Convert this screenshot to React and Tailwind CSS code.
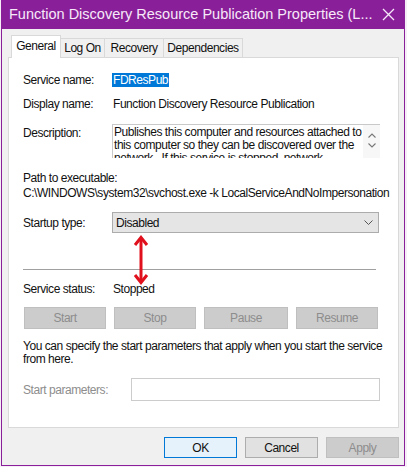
export default function App() {
  const btnDisabled =
    "w-[82px] h-[22px] bg-[#cccccc] border border-[#bfbfbf] text-[#8d8d8d] flex items-center justify-center";
  return (
    <div className="w-[407px] h-[467px] bg-[#f6eef7] overflow-hidden font-['Liberation_Sans',Arial,sans-serif] text-[12px] tracking-[-0.45px] text-[#111]">
      <div className="ml-[1px] w-[404px] h-[466px] bg-[#f0f0f0] border-x border-b border-[#8a1f9a] flex flex-col">
        {/* title bar */}
        <div className="h-[29px] bg-[#8a1f9a] flex items-center pl-[7px] pr-[7px] shrink-0">
          <span className="flex-1 text-[14.5px] tracking-normal text-[#f6e9f8] whitespace-nowrap">
            Function Discovery Resource Publication Properties (L...
          </span>
          <svg width="13" height="13" viewBox="0 0 13 13" className="mr-[2px]">
            <path d="M1 1 L12 12 M12 1 L1 12" stroke="#f6e9f8" strokeWidth="1.3" />
          </svg>
        </div>

        <div className="flex-1 flex flex-col pl-[6px] pr-[5px] pt-[6px]">
          {/* tabs */}
          <div className="flex items-end h-[22px] pl-[3px] relative z-10">
            <div className="w-[50px] h-[23px] -mb-px bg-white border-t border-x border-[#d9d9d9] flex items-center justify-center pb-[2px]">
              General
            </div>
            <div className="w-[44px] h-[19px] border-t border-r border-[#d9d9d9] flex items-center justify-center">
              Log On
            </div>
            <div className="w-[59px] h-[19px] border-t border-r border-[#d9d9d9] flex items-center justify-center">
              Recovery
            </div>
            <div className="w-[79px] h-[19px] border-t border-r border-[#d9d9d9] flex items-center justify-center">
              Dependencies
            </div>
          </div>

          {/* panel */}
          <div className="relative h-[371px] bg-white border border-[#d9d9d9] pl-[14px] flex flex-col leading-[14px]">
            <div className="mt-[15px] flex h-[14px] items-center">
              <span className="w-[89px]">Service name:</span>
              <span className="bg-[#0078d7] text-white px-[1px] h-[14px]">FDResPub</span>
            </div>
            <div className="mt-[10px] flex h-[14px] items-center">
              <span className="w-[90px]">Display name:</span>
              <span>Function Discovery Resource Publication</span>
            </div>
            <div className="mt-[13px] flex h-[34px]">
              <span className="w-[89px] mt-[2px]">Description:</span>
              <div className="w-[268px] h-[34px] border border-[#c9c9c9] border-b-0 border-r-0 flex overflow-hidden">
                <div className="flex-1 h-[33px] pl-[1px] pt-[1px] leading-[13px] overflow-hidden">
                  Publishes this computer and resources attached to this computer so they can be discovered over the network.&nbsp; If this service is stopped, network
                </div>
                <div className="w-[17px] bg-[#f7f7f7] flex flex-col items-center pt-[8px] gap-[5px]">
                  <svg width="8" height="5" viewBox="0 0 8 5">
                    <path d="M0.5 4.5 L4 1 L7.5 4.5" stroke="#777" strokeWidth="1.1" fill="none" />
                  </svg>
                  <svg width="8" height="5" viewBox="0 0 8 5">
                    <path d="M0.5 0.5 L4 4 L7.5 0.5" stroke="#777" strokeWidth="1.1" fill="none" />
                  </svg>
                </div>
              </div>
            </div>
            <div className="mt-[13px] h-[14px]">Path to executable:</div>
            <div className="mt-[1px] h-[14px] whitespace-nowrap">
              C:\WINDOWS\system32\svchost.exe -k LocalServiceAndNoImpersonation
            </div>
            <div className="mt-[12px] flex h-[21px] items-center">
              <span className="w-[89px]">Startup type:</span>
              <div className="w-[267px] h-[21px] bg-[#e5e5e5] border border-[#acacac] flex items-center pl-[3px] pr-[5px]">
                <span className="flex-1">Disabled</span>
                <svg width="9" height="5" viewBox="0 0 9 5">
                  <path d="M0.5 0.5 L4.5 4.5 L8.5 0.5" stroke="#555" strokeWidth="1" fill="none" />
                </svg>
              </div>
            </div>
            <div className="mt-[36px] w-[353px] h-px bg-[#a0a0a0]" />
            <div className="mt-[12px] flex h-[14px] items-center">
              <span className="w-[90px]">Service status:</span>
              <span>Stopped</span>
            </div>
            <div className="mt-[11px] flex gap-[8px] ml-[1px]">
              <div className={btnDisabled}>Start</div>
              <div className={btnDisabled}>Stop</div>
              <div className="w-[84px] h-[22px] bg-[#cccccc] border border-[#bfbfbf] text-[#8d8d8d] flex items-center justify-center">
                Pause
              </div>
              <div className={btnDisabled}>Resume</div>
            </div>
            <div className="mt-[11px] leading-[13px] w-[360px]">
              You can specify the start parameters that apply when you start the service from here.
            </div>
            <div className="mt-[12px] flex h-[23px] items-center">
              <span className="w-[108px] text-[#8d8d8d]">Start parameters:</span>
              <div className="w-[249px] h-[23px] border border-[#cccccc] bg-white" />
            </div>

            {/* red annotation arrow */}
            <svg
              className="absolute left-[124px] top-[177px]"
              width="16"
              height="50"
              viewBox="0 0 16 50"
            >
              <path d="M8 3 L8 47" stroke="#e0101c" strokeWidth="3" />
              <path d="M2 10 L8 2.5 L14 10" stroke="#e0101c" strokeWidth="3" fill="none" strokeLinejoin="miter" />
              <path d="M2 40 L8 47.5 L14 40" stroke="#e0101c" strokeWidth="3" fill="none" strokeLinejoin="miter" />
            </svg>
          </div>

          {/* dialog buttons */}
          <div className="mt-[9px] flex justify-end gap-[8px]">
            <div className="w-[73px] h-[21px] bg-[#e5f1fb] border border-[#0078d7] flex items-center justify-center">
              OK
            </div>
            <div className="w-[73px] h-[21px] bg-[#e1e1e1] border border-[#adadad] flex items-center justify-center">
              Cancel
            </div>
            <div className="w-[73px] h-[21px] bg-[#cccccc] border border-[#bfbfbf] text-[#8d8d8d] flex items-center justify-center">
              Apply
            </div>
          </div>
        </div>
      </div>
    </div>
  );
}
